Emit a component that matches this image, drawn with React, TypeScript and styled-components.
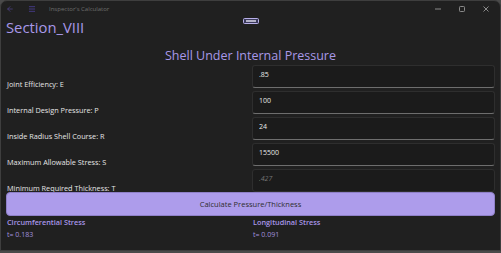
import styled, { createGlobalStyle } from "styled-components";
import { ArrowLeft, Menu } from "lucide-react";

const GlobalStyle = createGlobalStyle`
  html, body {
    margin: 0;
    padding: 0;
    background: #4a4a4a;
  }
  body {
    font-family: "Open Sans", "Noto Sans", sans-serif;
  }
`;

const Window = styled.div`
  width: 501px;
  height: 251px;
  box-sizing: border-box;
  background: #202020;
  border: 1px solid #3e3e3e;
  border-radius: 7px 7px 0 0;
  display: flex;
  flex-direction: column;
  overflow: hidden;
`;

const TitleBar = styled.div`
  height: 15px;
  display: flex;
  align-items: center;
  padding: 0 0 0 5px;
  color: #6f6f6f;
  font-size: 6px;
`;

const NavIcon = styled.span<{ $tint: string }>`
  display: flex;
  color: ${({ $tint }) => $tint};
  margin-right: 14px;
`;

const AppName = styled.span`
  flex: 1;
  margin-left: -1px;
`;

const Controls = styled.div`
  display: flex;
  align-items: center;
  gap: 16px;
  padding-right: 10px;
`;

const ControlGlyph = styled.svg`
  width: 8px;
  height: 8px;
  stroke: #8a8a8a;
  fill: none;
  stroke-width: 1;
`;

const Body = styled.div`
  flex: 1;
  display: flex;
  flex-direction: column;
  padding: 0 5px;
`;

const HeaderRow = styled.div`
  position: relative;
  height: 21px;
  display: flex;
  align-items: center;
`;

const PageTitle = styled.h1`
  margin: 0;
  font-size: 14.8px;
  font-weight: 500;
  color: #a898e8;
  line-height: 20px;
`;

const StackBadge = styled.svg`
  position: absolute;
  left: 237px;
  top: 2px;
  width: 16px;
  height: 6px;
`;

const SubTitle = styled.h2`
  margin: 10px 0 0 0;
  text-align: center;
  font-size: 12.5px;
  font-weight: 500;
  color: #a898e8;
  line-height: 17px;
`;

const Form = styled.div`
  display: flex;
  flex-direction: column;
  gap: 3px;
  margin-top: 1px;
`;

const Row = styled.div`
  display: grid;
  grid-template-columns: 1fr 1fr;
  column-gap: 3px;
  height: 23px;
`;

const Label = styled.label`
  color: #e6e6e6;
  font-size: 7.3px;
  line-height: 10px;
  padding-top: 14px;
  padding-left: 1px;
  white-space: nowrap;
`;

const Field = styled.input<{ $readOnly?: boolean }>`
  box-sizing: border-box;
  height: 23px;
  width: 100%;
  margin: 0;
  background: #1b1b1b;
  border: 1px solid #2e2e2e;
  border-bottom: 1.5px solid ${({ $readOnly }) => ($readOnly ? "#2e2e2e" : "#6e6e6e")};
  border-radius: 3px;
  padding: 0 6px 5px 6px;
  color: ${({ $readOnly }) => ($readOnly ? "#7a7a7a" : "#e8e8e8")};
  font-style: ${({ $readOnly }) => ($readOnly ? "italic" : "normal")};
  font-family: inherit;
  font-size: 7px;
  outline: none;
`;

const CalcButton = styled.button`
  margin-top: -3px;
  height: 24px;
  width: 100%;
  background: #ad9ceb;
  border: 1px solid #8f80c8;
  border-radius: 4px;
  color: #2f2f2f;
  font-family: inherit;
  font-size: 7.5px;
  cursor: pointer;
  position: relative;
`;

const Results = styled.div`
  display: grid;
  grid-template-columns: 1fr 1fr;
  column-gap: 3px;
  margin-top: 0;
`;

const ResultCol = styled.div`
  display: flex;
  flex-direction: column;
  padding-left: 1px;
`;

const ResultHead = styled.span`
  color: #a796e8;
  font-size: 7.3px;
  font-weight: 600;
  line-height: 12px;
`;

const ResultValue = styled.span`
  color: #a190df;
  font-size: 7px;
  line-height: 13px;
`;

const fields = [
  { label: "Joint Efficiency: E", value: ".85" },
  { label: "Internal Design Pressure: P", value: "100" },
  { label: "Inside Radius Shell Course: R", value: "24" },
  { label: "Maximum Allowable Stress: S", value: "15500" },
];

export default function App() {
  return (
    <>
      <GlobalStyle />
      <Window>
        <TitleBar>
          <NavIcon $tint="#5e4fb0">
            <ArrowLeft size={8} strokeWidth={1.6} />
          </NavIcon>
          <NavIcon $tint="#4b3f99">
            <Menu size={8} strokeWidth={2.4} />
          </NavIcon>
          <AppName>Inspector's Calculator</AppName>
          <Controls>
            <ControlGlyph viewBox="0 0 8 8">
              <line x1="1" y1="4" x2="7" y2="4" />
            </ControlGlyph>
            <ControlGlyph viewBox="0 0 8 8">
              <rect x="1.5" y="1.5" width="5" height="5" rx="0.8" />
            </ControlGlyph>
            <ControlGlyph viewBox="0 0 8 8">
              <path d="M1.5 1.5 L6.5 6.5 M6.5 1.5 L1.5 6.5" />
            </ControlGlyph>
          </Controls>
        </TitleBar>
        <Body>
          <HeaderRow>
            <PageTitle>Section_VIII</PageTitle>
            <StackBadge viewBox="0 0 16 6">
              <rect x="0.5" y="0.5" width="15" height="5" rx="1" fill="#3b3a5c" stroke="#b8b0e8" />
              <rect x="3" y="2.3" width="10" height="1.4" fill="#e8e6f6" />
            </StackBadge>
          </HeaderRow>
          <SubTitle>Shell Under Internal Pressure</SubTitle>
          <Form>
            {fields.map((f) => (
              <Row key={f.label}>
                <Label>{f.label}</Label>
                <Field defaultValue={f.value} />
              </Row>
            ))}
            <Row>
              <Label>Minimum Required Thickness: T</Label>
              <Field $readOnly readOnly placeholder=".427" />
            </Row>
            <CalcButton>Calculate Pressure/Thickness</CalcButton>
          </Form>
          <Results>
            <ResultCol>
              <ResultHead>Circumferential Stress</ResultHead>
              <ResultValue>t= 0.183</ResultValue>
            </ResultCol>
            <ResultCol>
              <ResultHead>Longitudinal Stress</ResultHead>
              <ResultValue>t= 0.091</ResultValue>
            </ResultCol>
          </Results>
        </Body>
      </Window>
    </>
  );
}
